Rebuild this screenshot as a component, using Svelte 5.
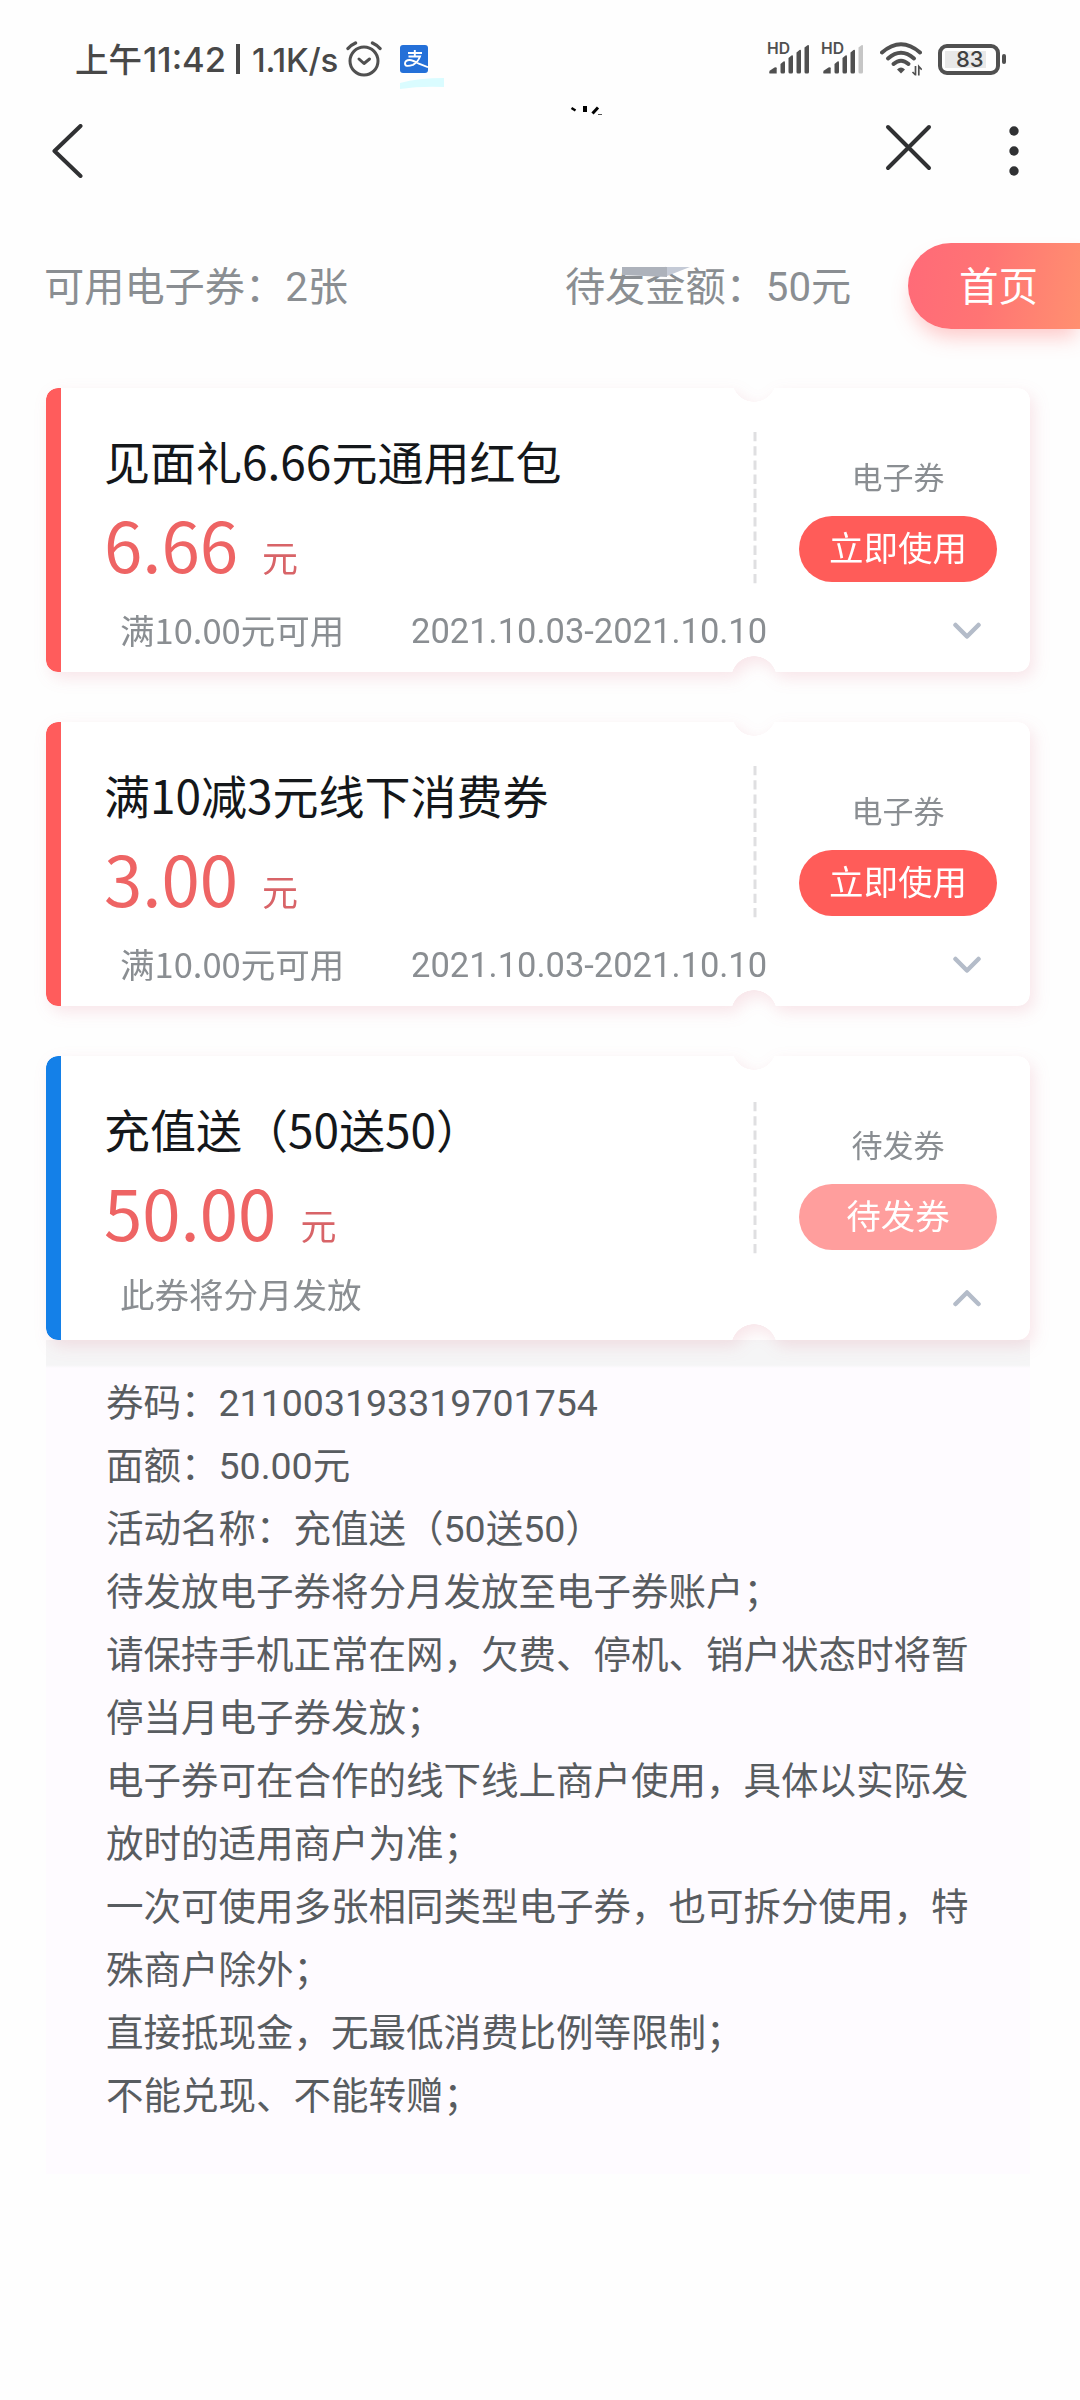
<script lang="ts">
  type Coupon = {
    title: string;
    amount: string;
    note: string;
    period?: string;
    kind: string;
    action: string;
    pending?: boolean;
    details?: string[];
  };

  const coupons: Coupon[] = [
    {
      title: '见面礼6.66元通用红包',
      amount: '6.66',
      note: '满10.00元可用',
      period: '2021.10.03-2021.10.10',
      kind: '电子券',
      action: '立即使用',
    },
    {
      title: '满10减3元线下消费券',
      amount: '3.00',
      note: '满10.00元可用',
      period: '2021.10.03-2021.10.10',
      kind: '电子券',
      action: '立即使用',
    },
    {
      title: '充值送（50送50）',
      amount: '50.00',
      note: '此券将分月发放',
      kind: '待发券',
      action: '待发券',
      pending: true,
      details: [
        '券码：211003193319701754',
        '面额：50.00元',
        '活动名称：充值送（50送50）',
        '待发放电子券将分月发放至电子券账户；',
        '请保持手机正常在网，欠费、停机、销户状态时将暂停当月电子券发放；',
        '电子券可在合作的线下线上商户使用，具体以实际发放时的适用商户为准；',
        '一次可使用多张相同类型电子券，也可拆分使用，特殊商户除外；',
        '直接抵现金，无最低消费比例等限制；',
        '不能兑现、不能转赠；',
      ],
    },
  ];

  let open = $state([false, false, true]);

  function toggle(i: number) {
    open[i] = !open[i];
  }
</script>

{#snippet signal(weak: boolean)}
  <svg class="signal" width="42" height="36" viewBox="0 -4 42 36" fill="#505050">
    <text x="-1" y="10.5" font-size="16" font-weight="600" textLength="23" lengthAdjust="spacingAndGlyphs">HD</text>
    <path d="M1.5 30.5q-1-1.5 .5-3l4.5-3q2.2-1 2.2 .8v5.2z" />
    <path d="M12.5 21l3-2.5q1.5-.8 1.5 1V29q0 1.5-1.5 1.5H14q-1.5 0-1.5-1.5z" />
    <path d="M20.5 15l3-2.5q1.5-.8 1.5 1V29q0 1.5-1.5 1.5H22q-1.5 0-1.5-1.5z" />
    <path d="M28.5 9.5l3-2.5q1.5-.8 1.5 1v21q0 1.5-1.5 1.5H30q-1.5 0-1.5-1.5z" />
    <path
      d="M36.5 4.5l3-2.3q1.5-.8 1.5 1V29q0 1.5-1.5 1.5H38q-1.5 0-1.5-1.5z"
      fill={weak ? '#c6c6c6' : '#505050'}
    />
  </svg>
{/snippet}

<div class="screen">
  <div class="status">
    <span class="cjk">上午</span>
    <span class="time">11:42</span>
    <span class="sep"></span>
    <span class="rate">1.1K/s</span>
    <svg class="alarm" width="36" height="36" viewBox="0 0 36 36" fill="none" stroke="#505050">
      <circle cx="18" cy="20" r="14" stroke-width="3" />
      <path d="M13 18l5 4.5 5.5-4.5" stroke-width="3" stroke-linecap="round" stroke-linejoin="round" />
      <path d="M2 7.5Q5 4 9.5 2M26.5 2Q31 4 34 7.5" stroke-width="3.4" stroke-linecap="round" />
    </svg>
    <div class="alipay">
      <svg width="28" height="28" viewBox="0 0 28 28" fill="none" stroke="#fff">
        <rect width="28" height="28" rx="3" fill="#2470d8" stroke="none" />
        <path
          d="M8 8h14M14.8 5v6.500M8.500 11.500H20Q18 17 13 19.800 5 22.500 5 18.500q0-3.500 4.500-3.500 3 0 10 4l8.500 3.200"
          stroke-width="1.900"
        />
      </svg>
      <svg class="smear" width="44" height="11" viewBox="0 0 44 11">
        <path d="M0 5Q18 0 44 0V9Q20 8 0 11z" fill="#dafcff" />
      </svg>
    </div>

    <div class="right">
      {@render signal(false)}
      {@render signal(true)}
      <svg class="wifi" width="42" height="34" viewBox="0 0 42 34" fill="none" stroke="#505050">
        <path d="M2 10.5Q21-6 40 10.5" stroke-width="4" stroke-linecap="round" />
        <path d="M8 16.5Q21 5 34 16.5" stroke-width="4" stroke-linecap="round" />
        <path d="M13.5 22Q21 15.5 28.5 22" stroke-width="4" stroke-linecap="round" />
        <path d="M21 31.5l-4-4q4-4 8 0z" fill="#505050" stroke="none" />
        <path d="M35.5 24v9.5M32.5 30l3 3M38.8 33.5V24.500l3 3.200" stroke-width="1.700" />
      </svg>
      <div class="battery"><span>83</span></div>
    </div>
  </div>

  <div class="nav">
    <svg width="32" height="54" viewBox="0 0 32 54" class="back">
      <path d="M28.500 2L2.500 27l26 25" />
    </svg>
    <!-- upper edge of the clipped page title -->
    <svg class="title-edge" width="34" height="10" viewBox="0 0 34 10" fill="none" stroke="#000">
      <path d="M1.500 2l4 2.500" stroke-width="2.500" />
      <path d="M15 0v6" stroke-width="4" />
      <path d="M28 1.500l-5.500 6" stroke-width="3" />
      <path d="M28 8.500h4" stroke-width="1" stroke="#555" />
    </svg>
    <svg width="48" height="48" viewBox="0 0 48 48" class="close">
      <path d="M3 3l41 41M44 3L3 44" />
    </svg>
    <svg width="10" height="52" viewBox="0 0 10 52" class="more" fill="#303133">
      <circle cx="5" cy="6" r="4.7" />
      <circle cx="5" cy="26" r="4.7" />
      <circle cx="5" cy="46" r="4.7" />
    </svg>
  </div>

  <div class="summary">
    <span>可用电子券：2张</span>
    <span class="due">
      待发金额：50元
      <svg class="smudge" width="68" height="10" viewBox="0 0 68 10">
        <path d="M0 0h45v10L0 8z" fill="#adb2bb" />
        <path d="M45 0h23L45 9z" fill="#c4cad6" />
      </svg>
    </span>
    <button class="home">首页</button>
  </div>

  <div class="list">
    {#each coupons as c, i}
      <div class="item">
        <div class="shadow">
          <div class="card" class:pending={c.pending}>
            <div class="top">
              <div class="info">
                <div class="title">{c.title}</div>
                <div class="amount">{c.amount}<span class="unit">元</span></div>
              </div>
              <svg class="dash" width="4" height="152" viewBox="0 0 4 152">
                <path d="M2 0v152" stroke="#dfdfe1" stroke-width="3" stroke-dasharray="9.3 4.9" />
              </svg>
              <div class="side">
                <div class="kind">{c.kind}</div>
                <button class="use">{c.action}</button>
              </div>
            </div>
            <div class="foot">
              <span class="note">{c.note}</span>
              {#if c.period}<span class="period">{c.period}</span>{/if}
              <button class="toggle" class:up={open[i]} aria-label="展开" onclick={() => toggle(i)}>
                <svg width="30" height="18" viewBox="0 0 30 18">
                  <path d="M3.5 3L15 14.5 26.5 3" />
                </svg>
              </button>
            </div>
          </div>
        </div>
        {#if open[i] && c.details}
          <div class="details">
            {#each c.details as line}
              <p>{line}</p>
            {/each}
          </div>
        {/if}
      </div>
    {/each}
  </div>
</div>

<style>
  :global(body) {
    background: #fefefe;
  }

  .screen {
    width: 1080px;
    height: 2400px;
    overflow: hidden;
    background: #fefefe;
    font-family: Roboto, 'Noto Sans CJK SC', sans-serif;
    color: #8a8e92;
  }

  button {
    border: none;
    padding: 0;
    background: none;
    font-family: inherit;
    cursor: pointer;
  }

  svg {
    display: block;
    flex: none;
  }

  .status {
    display: flex;
    align-items: center;
    height: 120px;
    box-sizing: border-box;
    padding: 0 80px 2px 75px;
    color: #484848;
    font-family: Inter, 'Noto Sans CJK SC', sans-serif;
    line-height: 40px;
    white-space: nowrap;
  }

  .cjk {
    width: 68px;
    font-family: 'Noto Sans CJK SC', sans-serif;
    font-weight: 500;
    font-size: 33.5px;
    margin-top: -2px;
  }

  .time {
    width: 93px;
    padding-top: 2px;
    font-size: 34.5px;
    font-weight: 500;
  }

  .sep {
    width: 4px;
    height: 30px;
    background: #484848;
  }

  .rate {
    width: 88px;
    margin-left: 12px;
    padding-top: 2px;
    font-size: 33px;
    font-weight: 500;
    letter-spacing: -0.2px;
  }

  .alarm {
    margin-left: 6px;
  }

  .alipay {
    position: relative;
    margin-left: 18px;
  }

  .smear {
    position: absolute;
    left: 0;
    top: 33px;
  }

  .right {
    display: flex;
    align-items: center;
    gap: 12px;
    margin-left: auto;
  }

  .signal {
    overflow: visible;
    margin-top: -4px;
  }

  .signal text {
    font-family: Inter, sans-serif;
  }

  .wifi {
    margin-left: 4px;
  }

  .battery {
    position: relative;
    width: 62px;
    height: 31px;
    margin-left: 4px;
    box-sizing: border-box;
    border: 4px solid #505050;
    border-radius: 9px;
    padding: 3px;
    display: flex;
  }

  .battery span {
    width: 41px;
    background: #e8e8e8;
    color: #404040;
    font-size: 22px;
    font-weight: 500;
    line-height: 17px;
    text-indent: 11px;
  }

  .battery::after {
    content: '';
    position: absolute;
    right: -10px;
    top: 6px;
    width: 4px;
    height: 10px;
    border-radius: 2px;
    background: #505050;
  }

  .nav {
    display: flex;
    align-items: center;
    height: 62px;
    padding: 0 61px 0 52px;
  }

  .nav path {
    fill: none;
    stroke-linecap: round;
    stroke-linejoin: round;
  }

  .back path,
  .close path {
    stroke: #303133;
    stroke-width: 4;
  }

  .title-edge {
    align-self: flex-start;
    margin: -14px 0 0 486px;
  }

  .title-edge path {
    stroke-linecap: butt;
  }

  .close {
    margin-left: auto;
    margin-top: -6px;
  }

  .more {
    margin-left: 76px;
  }

  .summary {
    display: flex;
    align-items: center;
    height: 86px;
    margin-top: 61px;
    padding-left: 44px;
    font-size: 40.2px;
    line-height: 60px;
    white-space: nowrap;
  }

  .summary span {
    padding-top: 4px;
  }

  .due {
    position: relative;
    margin-left: 217px;
  }

  .smudge {
    position: absolute;
    left: 57px;
    top: 13px;
  }

  .home {
    width: 172px;
    height: 86px;
    margin-left: auto;
    padding: 3px 0 0 9px;
    border-radius: 43px 0 0 43px;
    background: linear-gradient(100deg, #ff6a78, #ff7474 45%, #ff9070);
    box-shadow: 0 12px 20px -4px rgba(255, 100, 100, 0.35);
    color: #fff;
    font-size: 39.5px;
    line-height: 60px;
  }

  .list {
    display: flex;
    flex-direction: column;
    gap: 50px;
    padding: 59px 50px 0 46px;
  }

  .shadow {
    position: relative;
    z-index: 1;
    filter: drop-shadow(4px 6px 8px rgba(205, 60, 95, 0.13));
  }

  .card {
    height: 284px;
    box-sizing: border-box;
    border-left: 15px solid #ff5c5c;
    border-radius: 12px;
    background: #fff;
    font-family: 'Noto Sans CJK SC', sans-serif;
    /* half-round cuts on both ends of the tear line */
    mask:
      radial-gradient(circle 22px at 708px -8px, transparent 21.5px, #000 22px) border-box,
      radial-gradient(circle 23px at 708px 291px, transparent 22.5px, #000 23px) border-box;
    mask-composite: intersect;
  }

  .card.pending {
    border-left-color: #1480e8;
  }

  .top {
    display: flex;
    height: 210px;
  }

  .info {
    width: 646px;
    padding: 39px 0 0 43px;
    box-sizing: border-box;
    white-space: nowrap;
  }

  .title {
    height: 66px;
    color: #14171a;
    font-size: 46px;
    line-height: 66px;
  }

  .amount {
    height: 100px;
    color: #ee6464;
    font-size: 69px;
    line-height: 100px;
  }

  .unit {
    position: relative;
    top: -1px;
    margin-left: 24px;
    color: #d86468;
    font-size: 36px;
  }

  .dash {
    margin: 44px 0 0 46px;
  }

  .pending .dash {
    margin-top: 46px;
  }

  .side {
    flex: 1;
    padding: 66px 33px 0 0;
    display: flex;
    flex-direction: column;
    align-items: flex-end;
  }

  .kind {
    width: 198px;
    text-align: center;
    font-size: 31px;
    line-height: 44px;
  }

  .use {
    width: 198px;
    height: 66px;
    margin-top: 18px;
    padding-bottom: 6px;
    border-radius: 33px;
    background: #ff5c59;
    color: #fff;
    font-size: 34.5px;
    line-height: 50px;
  }

  .pending .use {
    background: #ff9e9d;
  }

  .foot {
    display: flex;
    align-items: center;
    height: 64px;
    padding: 0 48px 0 59px;
    font-size: 34.5px;
    line-height: 50px;
  }

  .note {
    width: 291px;
    padding-bottom: 3px;
  }

  .pending .note {
    padding-bottom: 10px;
  }

  .period {
    padding-top: 1px;
    font-family: Roboto, sans-serif;
  }

  .toggle {
    margin-left: auto;
    padding-top: 1px;
  }

  .toggle path {
    fill: none;
    stroke: #b4bcc9;
    stroke-width: 4.5;
    stroke-linecap: round;
    stroke-linejoin: round;
  }

  .toggle.up {
    transform: rotate(180deg);
  }

  .details {
    height: 834px;
    width: 984px;
    box-sizing: border-box;
    padding: 32px 56px 0 60px;
    background: linear-gradient(#f5f5f6 25px, #fefbff 28px);
    color: #585c60;
    font-size: 37.5px;
    line-height: 63px;
  }

  .details p {
    margin: 0;
  }
</style>
